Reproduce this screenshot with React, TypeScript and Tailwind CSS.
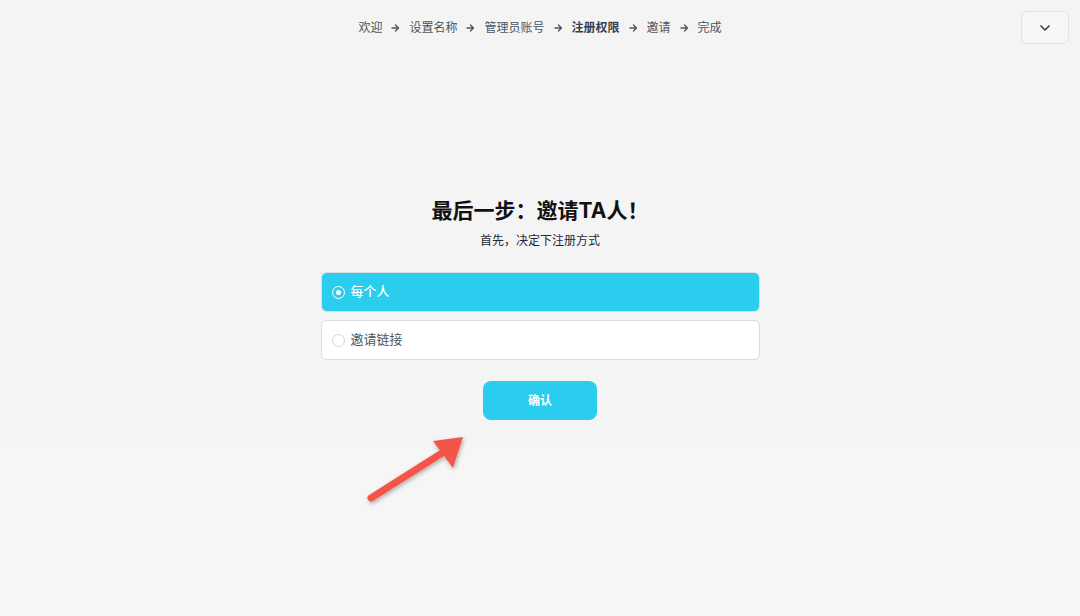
import { ChevronDown } from "lucide-react"

const steps = ["欢迎", "设置名称", "管理员账号", "注册权限", "邀请", "完成"]

function Arrow() {
  return (
    <svg width="9" height="10" viewBox="0 0 9 10" className="mx-[9px] text-[#4b5563]">
      <path d="M1 5h6.5M4.5 2l3 3-3 3" fill="none" stroke="currentColor" strokeWidth="1.4" strokeLinecap="round" strokeLinejoin="round" />
    </svg>
  )
}

export default function App() {
  const font = { fontFamily: "Inter, 'Noto Sans CJK SC', sans-serif" }

  return (
    <div className="relative w-[1080px] h-[616px] overflow-hidden bg-[#f4f4f4] text-[#111827]" style={font}>
      <div className="absolute inset-x-0 bottom-0 h-[170px] bg-[#f6f6f6]" />

      <div className="relative flex h-[54px] items-start justify-center pt-[18px]">
        <div className="flex items-center text-[12px] leading-[20px] text-[#4b5563]">
          {steps.map((s, i) => (
            <div key={s} className="flex items-center">
              <span className={s === "注册权限" ? "font-bold text-[#374151]" : ""}>{s}</span>
              {i < steps.length - 1 && <Arrow />}
            </div>
          ))}
        </div>
        <button className="absolute right-[11px] top-[11px] flex h-[33px] w-[48px] items-center justify-center rounded-md border border-[#e1e3e8] bg-[#f7f7f8]">
          <ChevronDown size={16} strokeWidth={2.5} className="text-[#374151]" />
        </button>
      </div>

      <div className="relative mt-[142px] flex flex-col items-center">
        <h1 className="text-[21px] font-bold leading-[30px] text-[#111111]">最后一步：邀请TA人！</h1>
        <p className="mt-[7px] text-[12px] leading-[16px] text-[#1f2937]">首先，决定下注册方式</p>

        <div className="mt-[23px] flex w-[439px] flex-col gap-[8px]">
          <label className="flex h-[40px] items-center gap-[6px] rounded-md border border-[#dcdfe4] bg-[#2bcdee] px-[10px] text-[13px] font-medium text-white">
            <span className="flex h-[13px] w-[13px] items-center justify-center rounded-full border border-white">
              <span className="h-[5px] w-[5px] rounded-full bg-white" />
            </span>
            每个人
          </label>
          <label className="flex h-[40px] items-center gap-[6px] rounded-md border border-[#d9dbe1] bg-white px-[10px] text-[13px] text-[#4b5563]">
            <span className="h-[13px] w-[13px] rounded-full border border-[#d1d5db]" />
            邀请链接
          </label>
        </div>

        <button className="mt-[21px] h-[39px] w-[114px] rounded-lg bg-[#2bcdee] text-[12px] font-bold text-white">确认</button>
      </div>

      <svg className="absolute left-[360px] top-[428px]" width="115" height="85" viewBox="0 0 115 85">
        <defs>
          <filter id="sh" x="-20%" y="-20%" width="140%" height="140%">
            <feDropShadow dx="1" dy="2" stdDeviation="2" floodColor="#000" floodOpacity="0.3" />
          </filter>
        </defs>
        <g filter="url(#sh)">
          <line x1="11" y1="70" x2="90" y2="20" stroke="#f4544a" strokeWidth="7" strokeLinecap="round" />
          <path d="M103 9 L73 13 L93 40 Z" fill="#f4544a" />
        </g>
      </svg>
    </div>
  )
}
